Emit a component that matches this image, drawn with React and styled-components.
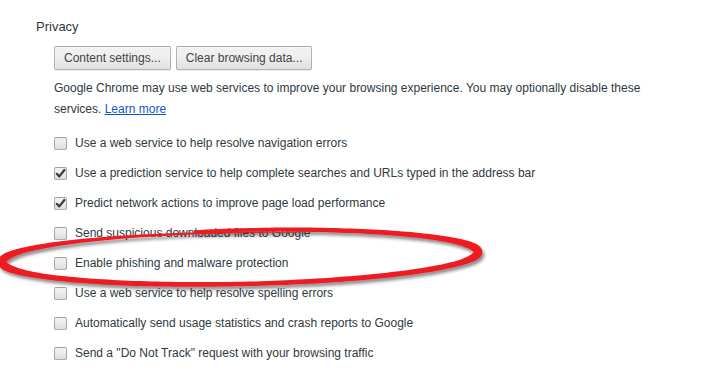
import React from 'react';
import styled, { createGlobalStyle } from 'styled-components';

const GlobalStyle = createGlobalStyle`
  html, body {
    margin: 0;
    padding: 0;
    background: #fff;
  }
  body {
    font-family: "Liberation Sans", Arial, sans-serif;
    color: #303942;
  }
`;

const options = [
  { label: 'Use a web service to help resolve navigation errors', checked: false },
  { label: 'Use a prediction service to help complete searches and URLs typed in the address bar', checked: true },
  { label: 'Predict network actions to improve page load performance', checked: true },
  { label: 'Send suspicious downloaded files to Google', checked: false },
  { label: 'Enable phishing and malware protection', checked: false },
  { label: 'Use a web service to help resolve spelling errors', checked: false },
  { label: 'Automatically send usage statistics and crash reports to Google', checked: false },
  { label: 'Send a "Do Not Track" request with your browsing traffic', checked: false },
];

// hand-drawn red ring: an ellipse traced with a brush whose width varies along the way
const widths = [
  [-101, 2.5], [-80, 4], [-30, 5.5], [0, 9], [25, 5.5], [90, 4.5],
  [150, 5.5], [180, 9], [205, 5.5], [240, 3], [265, 1.8], [285, 0.6],
];

const lerpTable = (table, d) => {
  for (let i = 0; i < table.length - 1; i++) {
    const [a, wa] = table[i];
    const [b, wb] = table[i + 1];
    if (d >= a && d <= b) return wa + ((wb - wa) * (d - a)) / (b - a);
  }
  return table[table.length - 1][1];
};

const ringPath = (() => {
  const cx = 240, cy = 257, rx = 238;
  const rot = (-1.2 * Math.PI) / 180;
  const outer = [];
  const inner = [];
  for (let d = -101; d <= 285; d += 1.5) {
    const t = (d * Math.PI) / 180;
    const ry = d > 200 ? 27 - ((d - 200) / 85) * 3 : 27;
    const w = lerpTable(widths, d) / 2;
    const px = rx * Math.cos(t);
    const py = ry * Math.sin(t);
    let nx = ry * Math.cos(t);
    let ny = rx * Math.sin(t);
    const len = Math.hypot(nx, ny);
    nx /= len;
    ny /= len;
    const put = (x, y) => [
      cx + x * Math.cos(rot) - y * Math.sin(rot),
      cy + x * Math.sin(rot) + y * Math.cos(rot),
    ];
    outer.push(put(px + nx * w, py + ny * w));
    inner.push(put(px - nx * w, py - ny * w));
  }
  const pts = [...outer, ...inner.reverse()];
  return 'M' + pts.map(([x, y]) => `${x.toFixed(1)} ${y.toFixed(1)}`).join(' L') + ' Z';
})();

const App = () => {
  return (
    <Page>
      <GlobalStyle />
      <Heading>Privacy</Heading>
      <Section>
        <ButtonRow>
          <Button>Content settings...</Button>
          <Button>Clear browsing data...</Button>
        </ButtonRow>
        <Description>
          Google Chrome may use web services to improve your browsing experience. You may optionally disable these
          services. <Link href="#">Learn more</Link>
        </Description>
        <OptionList>
          {options.map((o) => (
            <Option key={o.label}>
              <Box checked={o.checked}>
                {o.checked && (
                  <svg width="11" height="11" viewBox="0 0 11 11">
                    <path d="M1.8 5.8 L4.3 8.4 L9.4 2" fill="none" stroke="#3a3a3a" strokeWidth="2.2" strokeLinecap="round" strokeLinejoin="round" />
                  </svg>
                )}
              </Box>
              <span>{o.label}</span>
            </Option>
          ))}
        </OptionList>
      </Section>
      <Marker width="718" height="389" viewBox="0 0 718 389">
        <defs>
          <filter id="shade" x="-5%" y="-40%" width="110%" height="180%">
            <feDropShadow dx="2" dy="3" stdDeviation="1.8" floodColor="#222" floodOpacity="0.5" />
          </filter>
        </defs>
        <path d={ringPath} fill="#ee1b22" fillRule="nonzero" filter="url(#shade)" />
      </Marker>
    </Page>
  );
};

export default App;

const Page = styled.div`
  position: relative;
  width: 718px;
  height: 389px;
  box-sizing: border-box;
  padding: 18px 0 0 36px;
  overflow: hidden;
`;

const Heading = styled.h3`
  margin: 0 0 10px;
  font-size: 13px;
  line-height: 18px;
  font-weight: normal;
  color: #303942;
`;

const Section = styled.div`
  padding-left: 18px;
`;

const ButtonRow = styled.div`
  display: flex;
  gap: 5px;
`;

const Button = styled.button`
  height: 24px;
  padding: 0 9px;
  font-family: "Liberation Sans", Arial, sans-serif;
  font-size: 12px;
  color: #444;
  border: 1px solid rgba(0, 0, 0, 0.25);
  border-radius: 2px;
  background: linear-gradient(#f0f0f0, #f0f0f0 38%, #e0e0e0);
  box-shadow: 0 1px 0 rgba(0, 0, 0, 0.08), inset 0 1px 2px rgba(255, 255, 255, 0.75);
`;

const Description = styled.p`
  margin: 8px 0 0;
  font-size: 12px;
  line-height: 21px;
  max-width: 590px;
`;

const Link = styled.a`
  color: #15c;
  text-decoration: underline;
`;

const OptionList = styled.div`
  margin-top: 8px;
  display: flex;
  flex-direction: column;
`;

const Option = styled.label`
  display: flex;
  align-items: center;
  gap: 8px;
  height: 30px;
  font-size: 12px;
`;

const Box = styled.span`
  width: 13px;
  height: 13px;
  box-sizing: border-box;
  border: 1px solid rgba(0, 0, 0, 0.28);
  border-radius: 2px;
  background: linear-gradient(#f0f0f0, #ededed 38%, #dedede);
  display: flex;
  align-items: center;
  justify-content: center;
  flex-shrink: 0;
`;

const Marker = styled.svg`
  position: absolute;
  top: 0;
  left: 0;
  pointer-events: none;
`;
